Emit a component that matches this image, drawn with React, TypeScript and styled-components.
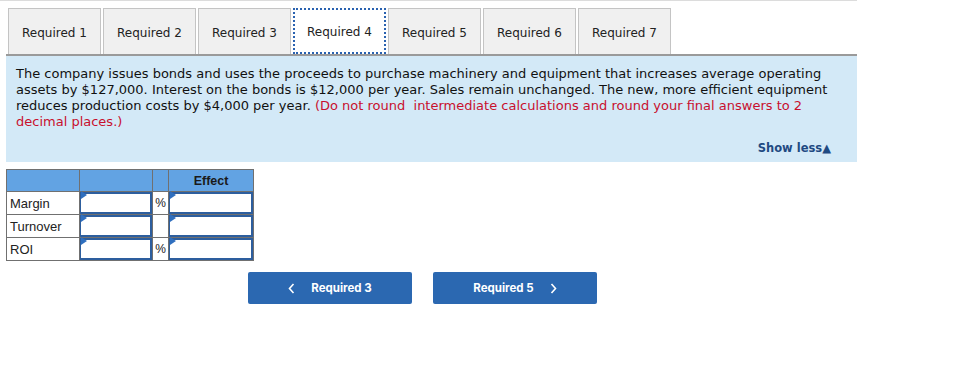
import React from 'react'
import styled, { createGlobalStyle } from 'styled-components'

const GlobalStyle = createGlobalStyle`
  body {
    margin: 0;
    background: #fff;
    font-family: "DejaVu Sans", Verdana, sans-serif;
  }
`

const tabs = ['Required 1', 'Required 2', 'Required 3', 'Required 4', 'Required 5', 'Required 6', 'Required 7']

const rows = [
  { label: 'Margin', pct: true },
  { label: 'Turnover', pct: false },
  { label: 'ROI', pct: true },
]

const Page = styled.div`
  width: 958px;
  height: 373px;
  overflow: hidden;
`

const TopRule = styled.div`
  width: 857px;
  height: 1px;
  background: #dcdcdc;
`

const TabBar = styled.div`
  display: flex;
  gap: 2px;
  margin: 7px 0 0 6px;
  padding-left: 2px;
  width: 849px;
  border-bottom: 2px solid #9a9a9a;
`

const Tab = styled.div<{ $active?: boolean }>`
  box-sizing: border-box;
  width: 93px;
  height: 46px;
  padding-top: 2px;
  display: flex;
  align-items: center;
  justify-content: center;
  font-size: 12px;
  color: #222;
  background: ${(p) => (p.$active ? '#fff' : '#f0f0f0')};
  border: ${(p) => (p.$active ? '2px dotted #2a62b0' : '1px solid #c4c4c4')};
  border-bottom: ${(p) => (p.$active ? '2px dotted #2a62b0' : 'none')};
  margin-bottom: ${(p) => (p.$active ? '-1px' : '0')};
`

const Panel = styled.div`
  box-sizing: border-box;
  width: 851px;
  height: 106px;
  margin-left: 6px;
  background: #d3e9f7;
  padding: 10px 10px 0 10px;
  display: flex;
  flex-direction: column;
`

const Question = styled.p`
  margin: 0;
  font-size: 13px;
  line-height: 16px;
  color: #111;
  white-space: nowrap;
`

const Note = styled.span`
  color: #c8102e;
`

const ShowLess = styled.div`
  margin-top: 11px;
  align-self: flex-end;
  margin-right: 16px;
  font-size: 11.5px;
  font-weight: bold;
  color: #1f4a82;
`

const Grid = styled.table`
  margin: 7px 0 0 6px;
  border-collapse: collapse;
  font-family: "Liberation Sans", Arial, sans-serif;
  font-size: 13px;
  color: #222;
`

const HeadCell = styled.th<{ $w: number }>`
  width: ${(p) => p.$w}px;
  height: 21px;
  padding: 0;
  background: #62a3e3;
  border: 1px solid #707070;
  font-weight: bold;
  font-size: 12.5px;
  color: #1a1a1a;
  text-align: center;
`

const Cell = styled.td`
  height: 22px;
  padding: 0;
  border: 1px solid #707070;
  background: #fff;
`

const LabelCell = styled(Cell)`
  padding-left: 3px;
`

const PctCell = styled(Cell)`
  text-align: center;
  font-size: 12px;
`

const InputBox = styled.div`
  position: relative;
  box-sizing: border-box;
  height: 22px;
  border: 2px solid #2d5e9e;
  border-left-width: 1px;
  background: #fff;

  &::before {
    content: '';
    position: absolute;
    left: 0;
    top: 0;
    border-top: 4px solid transparent;
    border-bottom: 4px solid transparent;
    border-left: 6px solid #2f6fbf;
    transform: translateY(-3px);
  }
`

const NavRow = styled.div`
  display: flex;
  gap: 21px;
  margin: 11px 0 0 248px;
`

const NavButton = styled.div`
  width: 164px;
  height: 32px;
  border-radius: 2px;
  background: #2b68b1;
  color: #fff;
  font-family: Inter, "Liberation Sans", sans-serif;
  font-weight: bold;
  font-size: 11.5px;
  display: flex;
  align-items: center;
  justify-content: center;
  gap: 16px;
`

const Chevron = ({ dir }: { dir: 'left' | 'right' }) => (
  <svg width="7" height="11" viewBox="0 0 7 11">
    <path
      d={dir === 'left' ? 'M5.5 1 L1.5 5.5 L5.5 10' : 'M1.5 1 L5.5 5.5 L1.5 10'}
      fill="none"
      stroke="#fff"
      strokeWidth="1.6"
    />
  </svg>
)

export default function App() {
  return (
    <Page>
      <GlobalStyle />
      <TopRule />
      <TabBar>
        {tabs.map((t) => (
          <Tab key={t} $active={t === 'Required 4'}>
            {t}
          </Tab>
        ))}
      </TabBar>
      <Panel>
        <Question>
          The company issues bonds and uses the proceeds to purchase machinery and equipment that increases average operating
          <br />
          assets by $127,000. Interest on the bonds is $12,000 per year. Sales remain unchanged. The new, more efficient equipment
          <br />
          reduces production costs by $4,000 per year.{' '}
          <Note>
            (Do not round&nbsp; intermediate calculations and round your final answers to 2
            <br />
            decimal places.)
          </Note>
        </Question>
        <ShowLess>Show less▲</ShowLess>
      </Panel>
      <Grid>
        <thead>
          <tr>
            <HeadCell $w={72} />
            <HeadCell $w={72} />
            <HeadCell $w={15} />
            <HeadCell $w={84}>Effect</HeadCell>
          </tr>
        </thead>
        <tbody>
          {rows.map((r) => (
            <tr key={r.label}>
              <LabelCell>{r.label}</LabelCell>
              <Cell>
                <InputBox />
              </Cell>
              <PctCell>{r.pct ? '%' : ''}</PctCell>
              <Cell>
                <InputBox />
              </Cell>
            </tr>
          ))}
        </tbody>
      </Grid>
      <NavRow>
        <NavButton>
          <Chevron dir="left" />
          Required 3
        </NavButton>
        <NavButton>
          Required 5
          <Chevron dir="right" />
        </NavButton>
      </NavRow>
    </Page>
  )
}
